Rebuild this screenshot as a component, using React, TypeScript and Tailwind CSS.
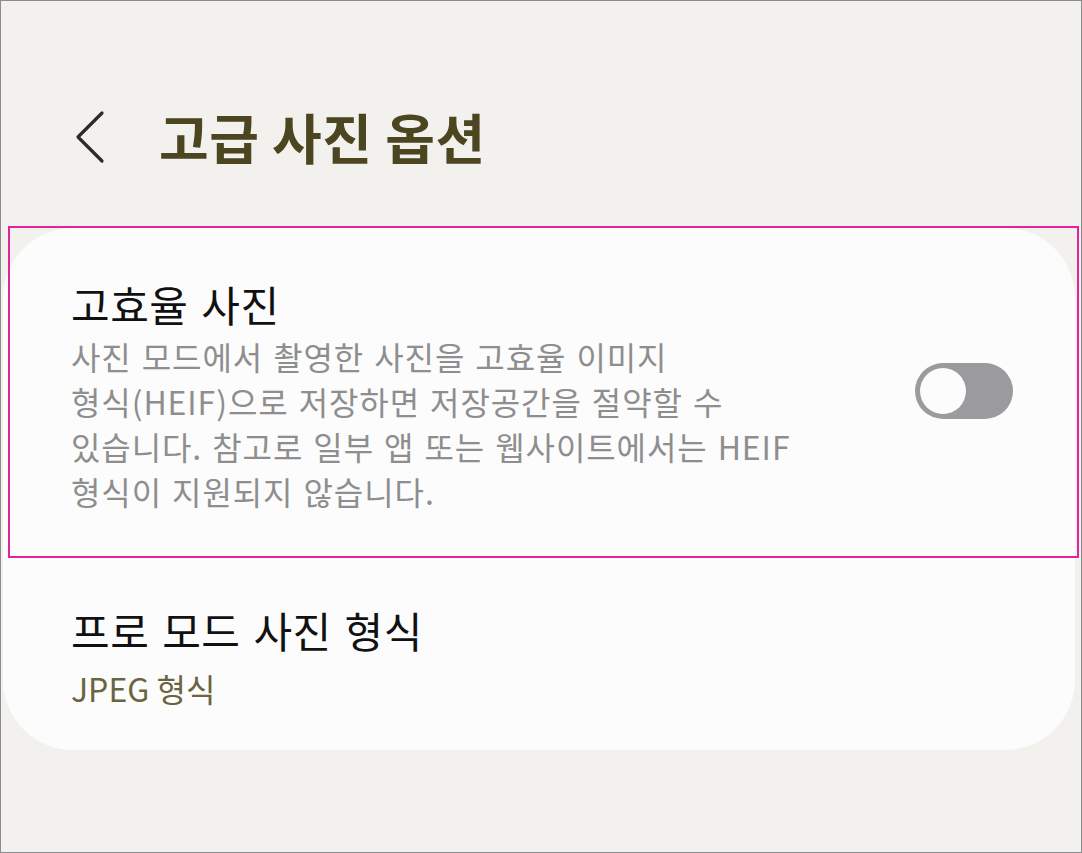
const font = { fontFamily: '"Noto Sans CJK KR", "Noto Sans", sans-serif' };

function BackIcon() {
  return (
    <svg width="34" height="54" viewBox="0 0 34 54" fill="none" className="text-[#2b2b2b]">
      <path d="M29 3 L5 27 L29 51" stroke="currentColor" strokeWidth="3.2" strokeLinecap="round" strokeLinejoin="round" />
    </svg>
  );
}

function Toggle() {
  return (
    <div className="mt-[87px] flex h-[56px] w-[98px] shrink-0 items-center rounded-full bg-[#9b9a9f] pl-[5px]">
      <div className="h-[46px] w-[46px] rounded-full bg-[#fcfcfd]" />
    </div>
  );
}

export default function App() {
  return (
    <div
      className="relative h-[853px] w-[1082px] overflow-hidden border border-[#8c8c8c] bg-[#f2f1ed]"
      style={font}
    >
      <header className="flex items-center pl-[72px] pt-[106px]">
        <BackIcon />
        <h1 className="ml-[52px] text-[54px] font-bold leading-[60px] tracking-[0.5px] text-[#4b4520]">고급 사진 옵션</h1>
      </header>

      <section className="ml-[2px] mr-[6px] mt-[61px] rounded-[70px] bg-[#fcfcfd]">
        <div className="flex items-start justify-between pb-[38px] pl-[68px] pr-[62px] pt-[48px]">
          <div>
            <p className="text-[42px] leading-[56px] tracking-[0.5px] text-[#111111] [word-spacing:3px]">고효율 사진</p>
            <p className="mt-[2px] text-[32px] leading-[45px] tracking-[0.9px] text-[#8e8e8e] [word-spacing:2px]">
              사진 모드에서 촬영한 사진을 고효율 이미지
              <br />
              형식(HEIF)으로 저장하면 저장공간을 절약할 수
              <br />
              있습니다. 참고로 일부 앱 또는 웹사이트에서는 HEIF
              <br />
              형식이 지원되지 않습니다.
            </p>
          </div>
          <Toggle />
        </div>

        <div className="pb-[40px] pl-[68px] pt-[50px]">
          <p className="text-[42px] leading-[56px] tracking-[0.5px] text-[#111111] [word-spacing:3px]">프로 모드 사진 형식</p>
          <p className="mt-[8px] text-[32px] leading-[44px] text-[#6a6440]">JPEG 형식</p>
        </div>
      </section>

      <div className="pointer-events-none absolute left-[7px] top-[225px] h-[332px] w-[1071px] border-2 border-[#e0259a]" />
    </div>
  );
}
